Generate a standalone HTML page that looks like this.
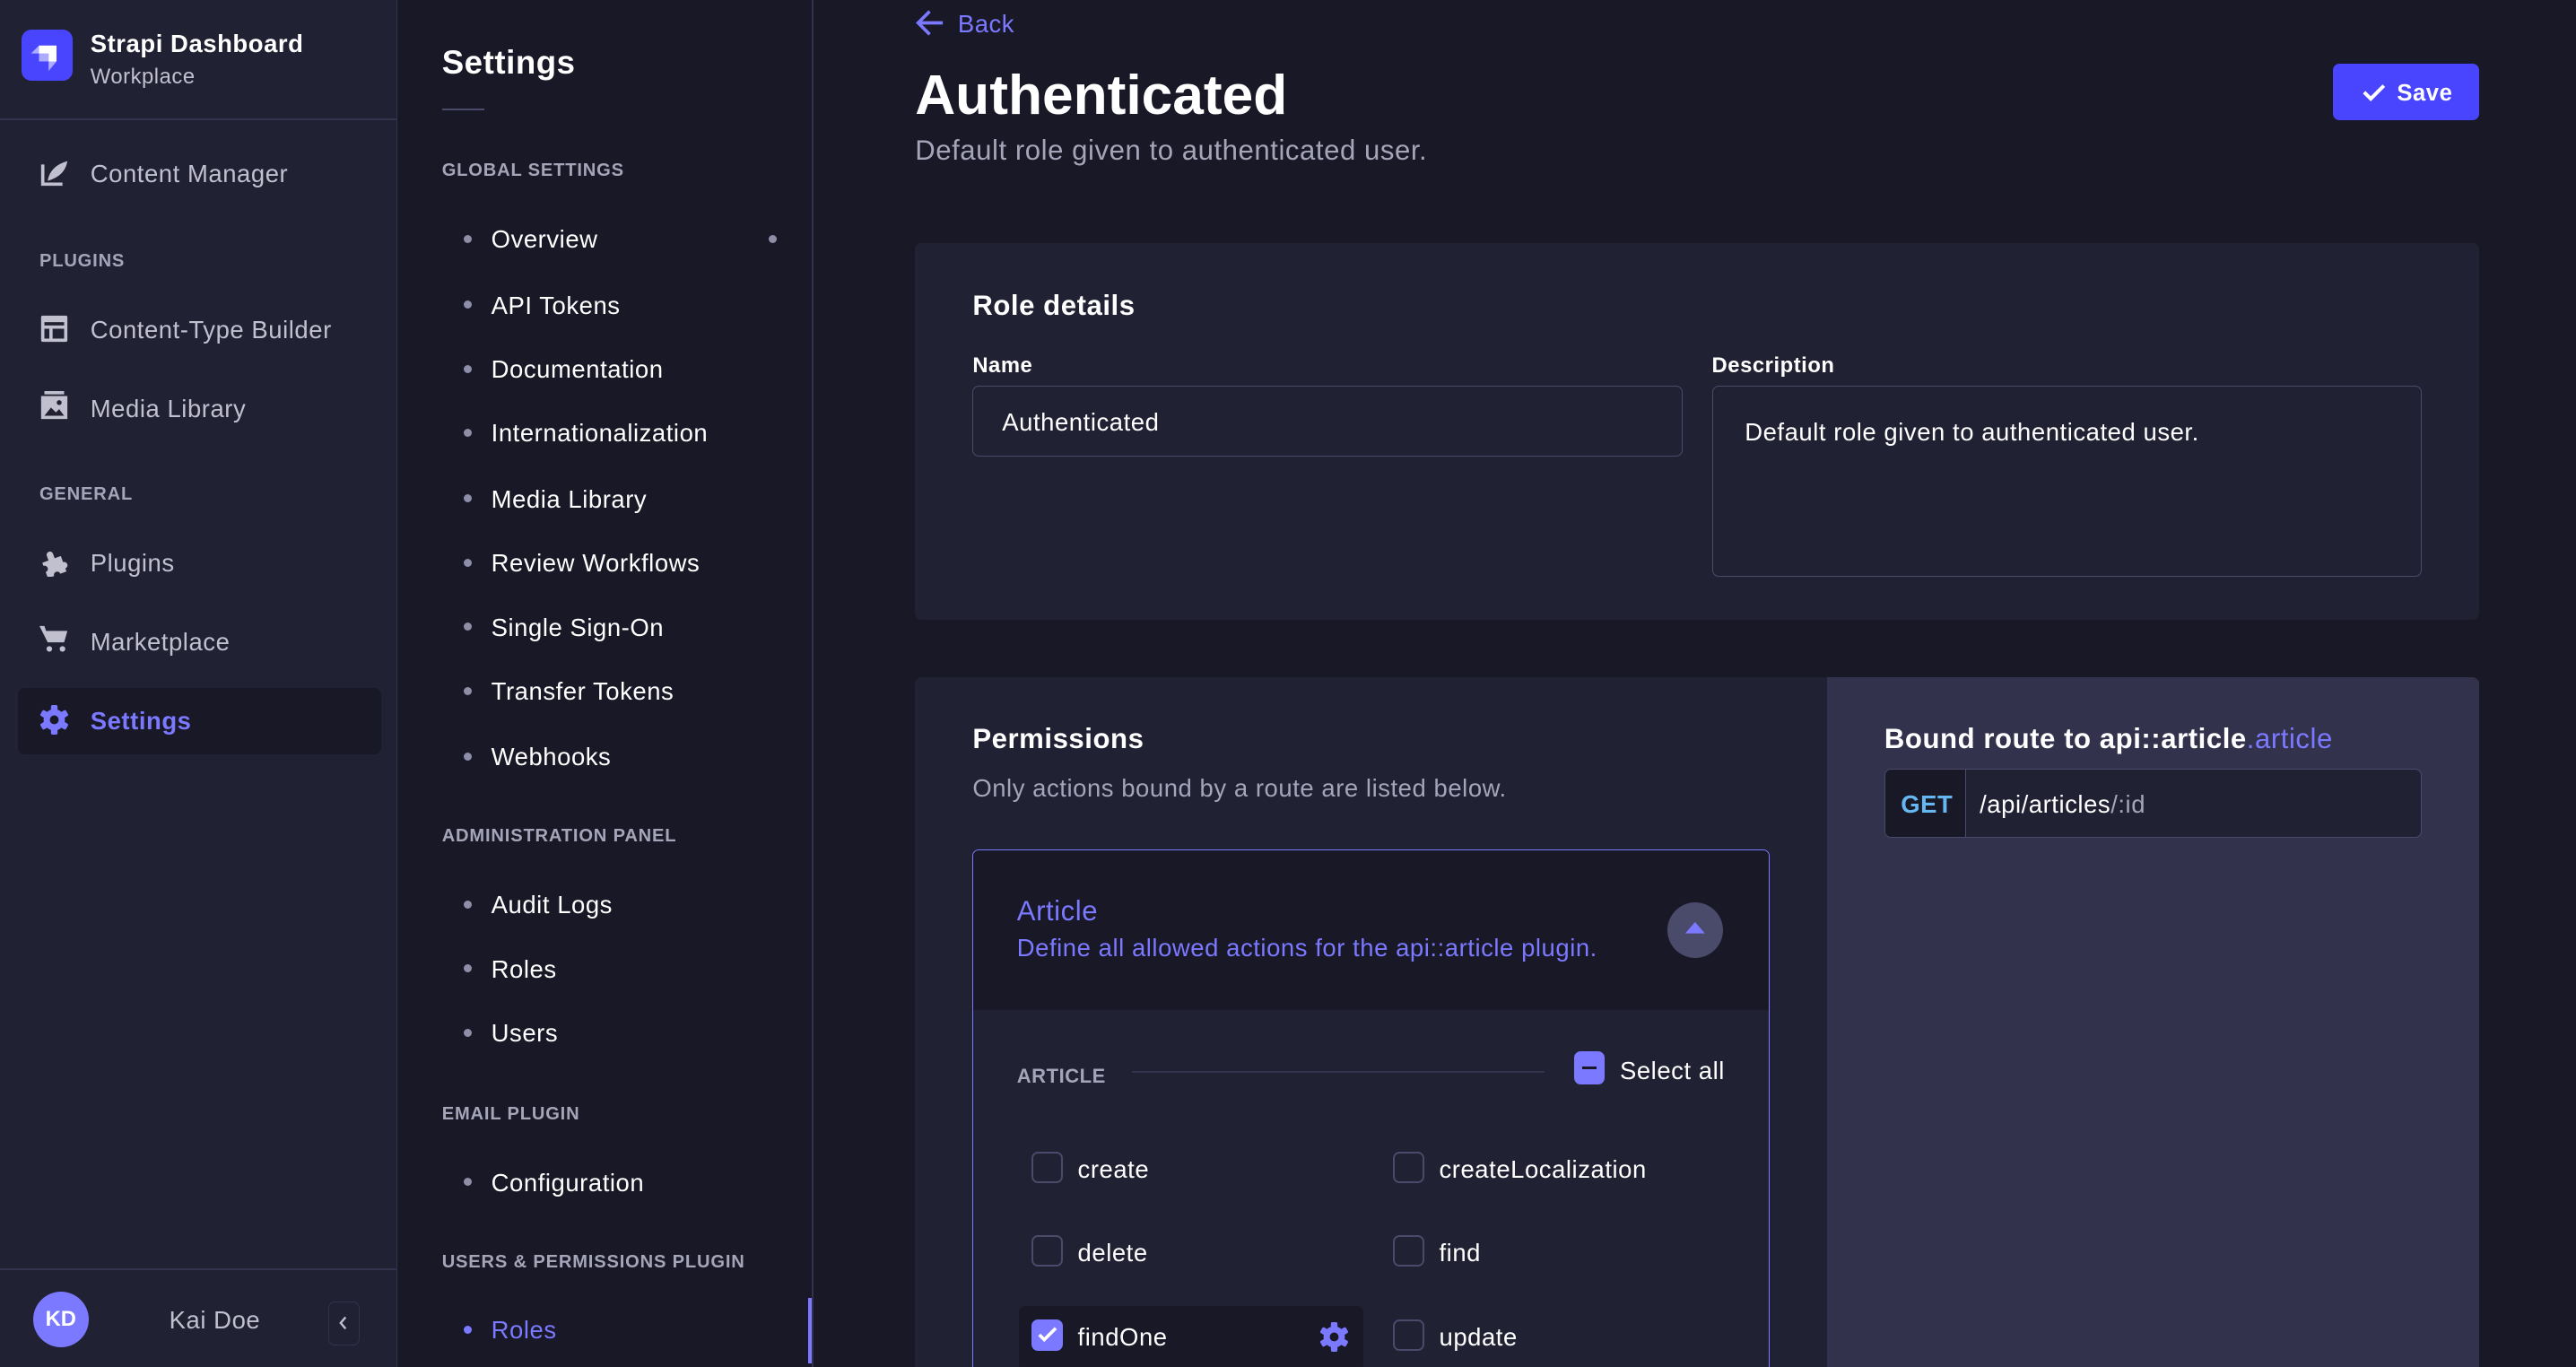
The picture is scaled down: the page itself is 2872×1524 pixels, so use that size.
<!DOCTYPE html>
<html><head><meta charset="utf-8"><style>
*{margin:0;padding:0;box-sizing:border-box}
html,body{width:2872px;height:1524px;overflow:hidden;background:#181826}
#r{position:absolute;left:0;top:0;width:1568px;height:832px;zoom:1.83163;font-family:"Liberation Sans",sans-serif;color:#fff;background:#181826;overflow:hidden}
.a{position:absolute;white-space:nowrap;line-height:20px;letter-spacing:.3px;transform:translateY(1px)}
.nav{font-size:15px;color:#c0c0cf}
.sec{font-size:11px;font-weight:bold;color:#a5a5ba;letter-spacing:.45px}
.si{font-size:15px;color:#fff}
.dot{position:absolute;width:5px;height:5px;border-radius:50%;background:#8e8ea9}
.cb{position:absolute;width:19px;height:19px;border:1.5px solid #4a4a6a;border-radius:4px}
.ck{font-size:15px;color:#fff}
</style></head><body><div id="r">
<!-- left nav -->
<div style="position:absolute;left:0;top:0;width:242px;height:832px;background:#212134;border-right:1px solid #32324d"></div>
<div style="position:absolute;left:0;top:72px;width:242px;height:1px;background:#32324d"></div>
<div style="position:absolute;left:13px;top:18px;width:31px;height:31px;border-radius:6px;background:#4945ff">
<svg width="31" height="31" viewBox="0 0 32 32"><path d="M11 10h11v10h-5v-5h-6z" fill="#fff"/><path d="M6 15l5-5v5z" fill="#fff" opacity=".55"/><path d="M11 15h6v5h-6z" fill="#fff" opacity=".55"/><path d="M17 20h5l-5 6z" fill="#fff" opacity=".55"/></svg></div>
<div class="a" style="left:55px;top:16px;font-size:15px;font-weight:bold">Strapi Dashboard</div>
<div class="a" style="left:55px;top:36px;font-size:13px;color:#c0c0cf">Workplace</div>
<svg style="position:absolute;left:24px;top:96px" width="18" height="18" viewBox="0 0 18 18"><path d="M2 4v12h12" stroke="#c0c0cf" stroke-width="2" fill="none"/><path d="M5 14c1-6 5-10 12-12-1 6-5 10-12 12z" fill="#c0c0cf"/></svg>
<div class="a nav" style="left:55px;top:95px">Content Manager</div>
<div class="a sec" style="left:24px;top:148px">PLUGINS</div>
<svg style="position:absolute;left:24px;top:191px" width="18" height="18" viewBox="0 0 18 18"><rect x="1" y="1" width="16" height="16" rx="1" fill="#c0c0cf"/><rect x="3" y="5" width="12" height="2" fill="#212134"/><rect x="3" y="9" width="3" height="6" fill="#212134"/><rect x="8" y="9" width="7" height="6" fill="#212134"/></svg>
<div class="a nav" style="left:55px;top:190px">Content-Type Builder</div>
<svg style="position:absolute;left:24px;top:238px" width="18" height="18" viewBox="0 0 18 18"><rect x="3" y="0" width="12" height="2" fill="#c0c0cf"/><rect x="1" y="3" width="16" height="14" fill="#c0c0cf"/><path d="M3 15l4-5 3 3 2-2 3 4z" fill="#212134"/><circle cx="12" cy="7" r="1.5" fill="#212134"/></svg>
<div class="a nav" style="left:55px;top:238px">Media Library</div>
<div class="a sec" style="left:24px;top:290px">GENERAL</div>
<svg style="position:absolute;left:24px;top:333px" width="18" height="18" viewBox="0 0 18 18"><path d="M2 7h4V4a2 2 0 014 0v3h4v4a2 2 0 010 4v2H10a2 2 0 00-4 0H2v-4a2 2 0 000-4z" fill="#c0c0cf" transform="rotate(-20 9 9)"/></svg>
<div class="a nav" style="left:55px;top:332px">Plugins</div>
<svg style="position:absolute;left:24px;top:380px" width="18" height="18" viewBox="0 0 18 18"><path d="M0 1h3l1 3h13l-2 7H5z" fill="#c0c0cf"/><circle cx="6" cy="15" r="1.7" fill="#c0c0cf"/><circle cx="14" cy="15" r="1.7" fill="#c0c0cf"/></svg>
<div class="a nav" style="left:55px;top:380px">Marketplace</div>
<div style="position:absolute;left:11px;top:419px;width:221px;height:40px;border-radius:4px;background:#181826"></div>
<svg style="position:absolute;left:24px;top:429px" width="18" height="18" viewBox="0 0 18 18"><g fill="#7b79ff"><circle cx="9" cy="9" r="6.5"/><rect x="7" y="0" width="4" height="18" rx="1"/><rect x="7" y="0" width="4" height="18" rx="1" transform="rotate(60 9 9)"/><rect x="7" y="0" width="4" height="18" rx="1" transform="rotate(120 9 9)"/></g><circle cx="9" cy="9" r="2.7" fill="#181826"/></svg>
<div class="a" style="left:55px;top:428px;font-size:15px;font-weight:bold;color:#7b79ff">Settings</div>
<div style="position:absolute;left:0;top:772px;width:242px;height:1px;background:#32324d"></div>
<div style="position:absolute;left:20px;top:786px;width:34px;height:34px;border-radius:50%;background:#7b79ff;font-size:13px;font-weight:bold;text-align:center;line-height:34px">KD</div>
<div class="a" style="left:103px;top:793px;font-size:15px;color:#c0c0cf">Kai Doe</div>
<div style="position:absolute;left:200px;top:792px;width:19px;height:27px;border:1px solid #32324d;border-radius:4px"><svg width="17" height="25" viewBox="0 0 17 25"><path d="M10 9l-3 3.5 3 3.5" stroke="#c0c0cf" stroke-width="1.3" fill="none"/></svg></div>
<!-- subnav -->
<div style="position:absolute;left:494px;top:0;width:1px;height:832px;background:#32324d"></div>
<div style="position:absolute;left:492px;top:790px;width:2px;height:40px;background:#7b79ff"></div>
<div class="a" style="left:269px;top:25px;font-size:20px;font-weight:bold;line-height:24px">Settings</div>
<div style="position:absolute;left:269px;top:66px;width:26px;height:1px;background:#4a4a6a"></div>
<div class="a sec" style="left:269px;top:93px">GLOBAL SETTINGS</div>
<div class="dot" style="left:468px;top:143px"></div>
<div class="dot" style="left:282px;top:143px"></div><div class="a si" style="left:299px;top:135px">Overview</div>
<div class="dot" style="left:282px;top:183px"></div><div class="a si" style="left:299px;top:175px">API Tokens</div>
<div class="dot" style="left:282px;top:222px"></div><div class="a si" style="left:299px;top:214px">Documentation</div>
<div class="dot" style="left:282px;top:261px"></div><div class="a si" style="left:299px;top:253px">Internationalization</div>
<div class="dot" style="left:282px;top:301px"></div><div class="a si" style="left:299px;top:293px">Media Library</div>
<div class="dot" style="left:282px;top:340px"></div><div class="a si" style="left:299px;top:332px">Review Workflows</div>
<div class="dot" style="left:282px;top:379px"></div><div class="a si" style="left:299px;top:371px">Single Sign-On</div>
<div class="dot" style="left:282px;top:418px"></div><div class="a si" style="left:299px;top:410px">Transfer Tokens</div>
<div class="dot" style="left:282px;top:458px"></div><div class="a si" style="left:299px;top:450px">Webhooks</div>
<div class="a sec" style="left:269px;top:498px">ADMINISTRATION PANEL</div>
<div class="dot" style="left:282px;top:548px"></div><div class="a si" style="left:299px;top:540px">Audit Logs</div>
<div class="dot" style="left:282px;top:587px"></div><div class="a si" style="left:299px;top:579px">Roles</div>
<div class="dot" style="left:282px;top:626px"></div><div class="a si" style="left:299px;top:618px">Users</div>
<div class="a sec" style="left:269px;top:667px">EMAIL PLUGIN</div>
<div class="dot" style="left:282px;top:717px"></div><div class="a si" style="left:299px;top:709px">Configuration</div>
<div class="a sec" style="left:269px;top:757px">USERS &amp; PERMISSIONS PLUGIN</div>
<div class="dot" style="left:282px;top:807px;background:#7b79ff"></div><div class="a si" style="left:299px;top:799px;color:#7b79ff">Roles</div>
<!-- main header -->
<svg style="position:absolute;left:557px;top:5px" width="18" height="18" viewBox="0 0 18 18"><path d="M17 9H2M9 2L2 9l7 7" stroke="#7b79ff" stroke-width="2" fill="none"/></svg>
<div class="a" style="left:583px;top:4px;font-size:15px;color:#7b79ff">Back</div>
<div class="a" style="left:557px;top:37px;font-size:34px;font-weight:bold;line-height:40px;letter-spacing:0">Authenticated</div>
<div class="a" style="left:557px;top:81px;font-size:17px;color:#a5a5ba">Default role given to authenticated user.</div>
<div style="position:absolute;left:1420px;top:39px;width:89px;height:34px;border-radius:4px;background:#4945ff"></div>
<svg style="position:absolute;left:1438px;top:49px" width="14" height="14" viewBox="0 0 14 14"><path d="M1 7l4 4 8-8" stroke="#fff" stroke-width="2.2" fill="none"/></svg>
<div class="a" style="left:1459px;top:46px;font-size:14px;font-weight:bold">Save</div>
<!-- role details -->
<div style="position:absolute;left:557px;top:148px;width:952px;height:229px;border-radius:4px;background:#212134"></div>
<div class="a" style="left:592px;top:175px;font-size:17px;font-weight:bold">Role details</div>
<div class="a" style="left:592px;top:212px;font-size:13px;font-weight:bold">Name</div>
<div class="a" style="left:1042px;top:212px;font-size:13px;font-weight:bold">Description</div>
<div style="position:absolute;left:592px;top:235px;width:432px;height:43px;border:1px solid #4a4a6a;border-radius:4px"></div>
<div class="a" style="left:610px;top:246px;font-size:15px">Authenticated</div>
<div style="position:absolute;left:1042px;top:235px;width:432px;height:116px;border:1px solid #4a4a6a;border-radius:4px"></div>
<div class="a" style="left:1062px;top:252px;font-size:15px">Default role given to authenticated user.</div>
<!-- permissions -->
<div style="position:absolute;left:557px;top:412px;width:556px;height:430px;background:#212134;border-radius:4px 0 0 0"></div>
<div style="position:absolute;left:1112px;top:412px;width:397px;height:430px;background:#32324d;border-radius:0 4px 0 0"></div>
<div class="a" style="left:592px;top:439px;font-size:17px;font-weight:bold">Permissions</div>
<div class="a" style="left:592px;top:469px;font-size:15px;color:#a5a5ba">Only actions bound by a route are listed below.</div>
<div style="position:absolute;left:592px;top:517px;width:485px;height:330px;border:1px solid #7b79ff;border-radius:4px;background:#212134;overflow:hidden">
<div style="position:absolute;left:0;top:0;width:485px;height:97px;background:#181826"></div></div>
<div class="a" style="left:619px;top:544px;font-size:17px;color:#7b79ff">Article</div>
<div class="a" style="left:619px;top:566px;font-size:15px;color:#7b79ff">Define all allowed actions for the api::article plugin.</div>
<div style="position:absolute;left:1015px;top:549px;width:34px;height:34px;border-radius:50%;background:#4a4a6a"></div>
<svg style="position:absolute;left:1025px;top:560px" width="14" height="10" viewBox="0 0 14 10"><path d="M1 8L7 1l6 7z" fill="#7b79ff"/></svg>
<div class="a" style="left:619px;top:644px;font-size:12px;font-weight:bold;color:#a5a5ba">ARTICLE</div>
<div style="position:absolute;left:689px;top:652px;width:251px;height:1px;background:#32324d"></div>
<div style="position:absolute;left:958px;top:640px;width:19px;height:20px;border-radius:4px;background:#7b79ff"><div style="position:absolute;left:5px;top:9px;width:9px;height:2px;background:#181826"></div></div>
<div class="a" style="left:986px;top:641px;font-size:15px">Select all</div>
<div class="cb" style="left:628px;top:701px"></div><div class="a ck" style="left:656px;top:701px">create</div>
<div class="cb" style="left:848px;top:701px"></div><div class="a ck" style="left:876px;top:701px">createLocalization</div>
<div class="cb" style="left:628px;top:752px"></div><div class="a ck" style="left:656px;top:752px">delete</div>
<div class="cb" style="left:848px;top:752px"></div><div class="a ck" style="left:876px;top:752px">find</div>
<div style="position:absolute;left:620px;top:795px;width:210px;height:40px;border-radius:4px;background:#181826"></div>
<div style="position:absolute;left:628px;top:803px;width:19px;height:19px;border-radius:4px;background:#7b79ff"></div>
<svg style="position:absolute;left:631px;top:807px" width="13" height="11" viewBox="0 0 13 11"><path d="M1.5 5.5l3 3 7-7" stroke="#fff" stroke-width="2" fill="none"/></svg>
<div class="a ck" style="left:656px;top:803px">findOne</div>
<svg style="position:absolute;left:803px;top:805px" width="18" height="18" viewBox="0 0 18 18"><g fill="#7b79ff"><circle cx="9" cy="9" r="6.5"/><rect x="7" y="0" width="4" height="18" rx="1"/><rect x="7" y="0" width="4" height="18" rx="1" transform="rotate(60 9 9)"/><rect x="7" y="0" width="4" height="18" rx="1" transform="rotate(120 9 9)"/></g><circle cx="9" cy="9" r="2.7" fill="#181826"/></svg>
<div class="cb" style="left:848px;top:803px"></div><div class="a ck" style="left:876px;top:803px">update</div>
<!-- bound route -->
<div class="a" style="left:1147px;top:439px;font-size:17px;font-weight:bold">Bound route to api::article<span style="color:#7b79ff;font-weight:normal">.article</span></div>
<div style="position:absolute;left:1147px;top:468px;width:327px;height:42px;border:1px solid #4a4a6a;border-radius:4px;background:#212134;overflow:hidden"><div style="position:absolute;left:0;top:0;width:49px;height:42px;background:#181826;border-right:1px solid #4a4a6a"></div></div>
<div class="a" style="left:1157px;top:479px;font-size:15px;font-weight:bold;color:#66b7f1">GET</div>
<div class="a" style="left:1205px;top:479px;font-size:15px">/api/articles<span style="color:#a5a5ba">/:id</span></div>
</div></body></html>
